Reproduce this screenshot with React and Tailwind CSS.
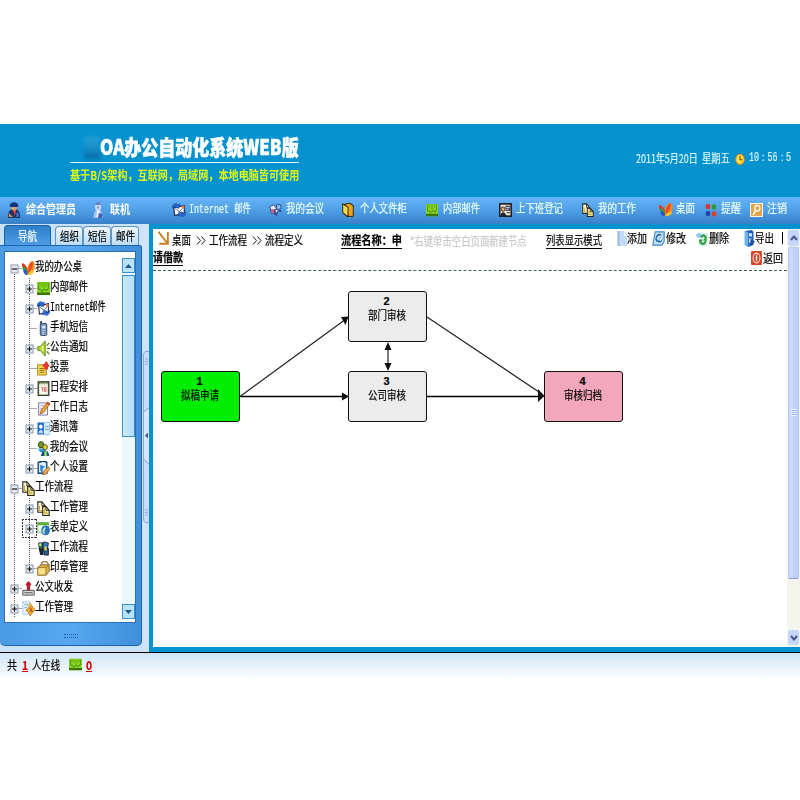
import React, { useLayoutEffect, useRef, useState } from "react";

// Text squeezed or stretched horizontally to a given width.
function T({ w, className = "", children }) {
  const ref = useRef(null);
  const [s, setS] = useState(1);
  useLayoutEffect(() => {
    setS(w / ref.current.offsetWidth);
  }, [w, children]);
  return (
    <span className={"block shrink-0 whitespace-nowrap " + className} style={{ width: w }}>
      <span ref={ref} className="inline-block origin-left" style={{ transform: `scaleX(${s})` }}>
        {children}
      </span>
    </span>
  );
}

const ART = {
  user: (<>
    <path d="M1 16c0-6 2-9 7-9s7 3 7 9z" fill="#15356b" /><path d="M6.500 8h4l-1.500 6z" fill="#e9432e" />
    <circle cx="8" cy="5" r="3.400" fill="#e0a070" /><path d="M3 4C3-1 13-1 13 4l-1 1H4z" fill="#0f3278" /><path d="M2 11l0 4h5z" fill="#e08a4a" /><path d="M11 10l3 2-1 3h-3z" fill="#3a6fc0" />
  </>),
  link: (<>
    <path d="M2 16c0-6 2-8 6-8s6 2 6 8z" fill="#a3c4f6" /><path d="M7 8h3l1 7H6z" fill="#f3f8ff" />
    <circle cx="8" cy="5" r="4" fill="#cfdcfa" /><path d="M4 3c1-4 7-4 8 0z" fill="#6e7cc8" /><path d="M9 11l5 1-1 4H8z" fill="#4a5cb8" /><circle cx="8" cy="5.500" r="1.300" fill="#7886cc" />
  </>),
  inet: (<>
    <path d="M2 5l12-2v9l-11 2z" fill="#fff" stroke="#1c2450" strokeWidth="1.300" /><path d="M3 6l5.500 4L14 4" fill="none" stroke="#5a6a90" strokeWidth="1" />
    <path d="M0 5c1-5 6-5 7-3l2-1-1 5-5-1 2-1c-2-1-3 0-4 2z" fill="#2a6fe0" stroke="#12357c" strokeWidth=".6" /><path d="M16 11c-1 5-6 5-7 3l-2 1 1-5 5 1-2 1c2 1 3 0 4-2z" fill="#2a6fe0" stroke="#12357c" strokeWidth=".6" />
    <path d="M11 3h3v3h-3z" fill="#ef7d3a" />
  </>),
  meet: (<>
    <path d="M1 4l5-2 3 4-2 5-4 1z" fill="#e8eefc" stroke="#24407e" /><path d="M2 7h4v4H3z" fill="#d9536c" />
    <path d="M9 2l5 0 1 4-5 2z" fill="#9cc4f8" stroke="#24407e" /><path d="M6 7h6l-2 8-4-2z" fill="#3c4f9c" /><path d="M8 8h3l-2 3z" fill="#fff" /><path d="M12 8h3v2h-3z" fill="#23418c" />
  </>),
  folder: (<>
    <path d="M2 2l8-2 5 3v12l-6 1z" fill="#e9a41c" stroke="#2a1e08" strokeWidth="1.200" /><path d="M1 1l7 4v11l-7-5z" fill="#ffd94c" stroke="#2a1e08" strokeWidth="1.200" />
  </>),
  green: (<>
    <rect x="0" y="1" width="16" height="14" rx="1" fill="#78c414" /><path d="M0 12h16v3H0z" fill="#3a7607" />
    <path d="M0 3l3 1 5 5 5-5 3-1v9H0z" fill="#8fd92a" /><path d="M2 3v6h2l2 2 3-2 3 1 2-2V3" fill="none" stroke="#4b930a" strokeWidth="1.300" />
  </>),
  clockin: (<>
    <rect x="1" y="1" width="14" height="14" fill="#f3ead2" stroke="#15151c" strokeWidth="1.800" /><circle cx="5" cy="7" r="2.500" fill="#e6aa6c" stroke="#222" />
    <path d="M2 15c0-6 6-6 7 0z" fill="#1e2430" /><path d="M8 3h6v6H8z" fill="#3b3d4e" /><path d="M9 5h4M9 7h3" stroke="#fff" /><path d="M9.500 11h4" stroke="#555" strokeWidth="1.500" />
  </>),
  pages: (<>
    <path d="M1 1h5l4 4v7H1z" fill="#fff6cc" stroke="#222" strokeWidth="1.300" /><path d="M7 6h4l4 4v5.500H7z" fill="#f5e693" stroke="#222" strokeWidth="1.300" />
    <path d="M3 5v5l3 1" fill="none" stroke="#c4aa44" strokeWidth="1.300" /><path d="M9 9v4h4" fill="none" stroke="#c4aa44" strokeWidth="1.300" /><path d="M6 1v4h4M11 6v4h4" fill="none" stroke="#222" />
  </>),
  fly: (<>
    <path d="M7 15C5 8 8 1 13 0c3 1 3 6 2 9-2 4-5 5-8 6z" fill="#f28a1c" /><path d="M8 13C7 8 9 3 13 0c1 4-1 9-5 13z" fill="#ea4a1e" />
    <path d="M7 12C2 10-1 6 0 2c4 1 7 4 7 10z" fill="#e23a26" /><path d="M7 13C2 12 0 9 1 6c3 0 6 3 6 7z" fill="#2f9c48" />
    <path d="M7 15C3 15 1 12 2 9c3 0 5 3 5 6z" fill="#2458cc" /><path d="M7 15c1-3 4-5 8-5-1 4-4 5-8 5z" fill="#fcc62c" />
  </>),
  dots: (<>
    <rect x="1" y="1" width="6" height="6" rx="2.500" fill="#df3529" /><rect x="9" y="1.500" width="6" height="6" rx="2.500" fill="#2d9a35" />
    <rect x="1" y="9" width="6" height="6" rx="2.500" fill="#1b45a8" /><rect x="9" y="9.500" width="6" height="6" rx="2.500" fill="#d8402c" />
  </>),
  key: (<>
    <rect x="0.500" y="0.500" width="15" height="15" fill="#dfa352" stroke="#fff6dd" strokeWidth="1.400" />
    <circle cx="9" cy="6" r="3.200" fill="none" stroke="#fff8e4" strokeWidth="1.600" /><path d="M7 8.500L4 13.500" stroke="#fff8e4" strokeWidth="2" />
  </>),
  phone: (<>
    <path d="M4 0h2v4H4z" fill="#333" /><rect x="4" y="2.500" width="8" height="13" rx="1.500" fill="#6c8db8" stroke="#2c3d58" />
    <path d="M6 5h4.500v3H6z" fill="#d3ecff" /><path d="M6 10h4.500M6 12h4.500M6 14h4.500" stroke="#e6eefa" strokeDasharray="1 .6" />
  </>),
  horn: (<>
    <path d="M1 6h3l6-6v16l-6-6H1z" fill="#b9dc2e" stroke="#4f7d10" /><path d="M7 5v6" stroke="#f4fcb0" strokeWidth="1.500" /><path d="M12 5l3-3M12 8h4M12 11l3 3" stroke="#4c6a18" strokeWidth="1.300" />
  </>),
  vote: (<>
    <path d="M0.500 4h11v11h-11z" fill="#f7d34c" stroke="#a6801c" /><path d="M3 8h6M3 10h6M3 12h6" stroke="#8d641c" /><path d="M9 9V6H6l5.500-6L16 6h-2.500v3z" fill="#e2352e" />
  </>),
  cal: (<>
    <rect x="1.500" y="1" width="13" height="14.500" fill="#dfe6c4" stroke="#2d3a2a" strokeWidth="1.600" /><path d="M2 2h12" stroke="#5d7448" strokeWidth="2" strokeDasharray="2 1" />
    <rect x="4" y="5" width="8" height="8.500" fill="#fff" /><path d="M5 7h2v4M9 7h2v4H9z" stroke="#d94a4a" fill="none" />
  </>),
  note: (<>
    <path d="M2 2h11v13H2z" fill="#f4efff" stroke="#6b6ba0" /><path d="M4 5h6M4 8h5" stroke="#96a4d8" /><path d="M4 14l1-4 8-9 3 2-8 9z" fill="#f2a52b" stroke="#8b5413" strokeWidth=".8" /><path d="M13 1l3 2-2 2-2-2z" fill="#d54832" />
  </>),
  card: (<>
    <rect x="0.500" y="1.500" width="15" height="13" rx="1" fill="#dcecff" stroke="#8eb8e4" /><rect x="1" y="2" width="7.500" height="12" fill="#1f68c8" />
    <circle cx="4.700" cy="6" r="2.200" fill="#fff" /><path d="M2 13c0-5 5.500-5 5.500 0z" fill="#b9dcff" /><path d="M10 6h4.500M10 9h4.500" stroke="#5e94cf" />
  </>),
  people: (<>
    <circle cx="5" cy="4" r="3.300" fill="#6f9a20" stroke="#1f3a0f" /><path d="M1 8h8l1 4H4z" fill="#2f9ad0" /><circle cx="10" cy="6.500" r="2.800" fill="#e6cb3a" stroke="#51471a" /><path d="M5 16c0-8 10-8 10 0z" fill="#12507c" /><path d="M9 11h3v5H9z" fill="#a5df58" />
  </>),
  settings: (<>
    <path d="M1.500 1.500L8 0l4 1.500V13H1.500z" fill="#dff0ff" stroke="#133f7c" strokeWidth="1.700" /><path d="M4 4l6 2-3 2v5l-3-3z" fill="#2e7fd8" /><path d="M7 15l1-4 6-5 2 2-5 6z" fill="#f0a445" stroke="#71501d" strokeWidth=".7" />
  </>),
  form: (<>
    <path d="M0.500 1.500h14v11h-14z" fill="#eef8e8" stroke="#7fb887" /><path d="M0.500 1.500h14v3h-14z" fill="#5fae36" /><circle cx="10.500" cy="10" r="5.300" fill="#2f6fc0" /><path d="M7 9c3-4 5-2 3 0s1 3-1 5c-2-1-3-3-2-5z" fill="#a8e6c2" />
  </>),
  flow: (<>
    <path d="M2 2h5v7H3z" fill="#2e7f42" stroke="#152218" /><path d="M8 1l6 1-1 6-6-1z" fill="#3f77c7" stroke="#152038" /><path d="M2 8h6v7H4z" fill="#1b2330" /><path d="M8 8h6v7H9z" fill="#245a90" stroke="#122" /><path d="M9 6h3v4H9z" fill="#e8d354" /><circle cx="4" cy="4" r="1.500" fill="#c7e39a" />
  </>),
  stampbox: (<>
    <path d="M1 7l4-3h10v7l-4 4H1z" fill="#dfb349" stroke="#7d5a18" /><path d="M1 7h10v8H1z" fill="#f8df8c" stroke="#9b7224" /><path d="M5 5c0-6 9-6 9 0" fill="none" stroke="#a08258" strokeWidth="1.700" /><path d="M11 7l4-3" stroke="#9b7224" />
  </>),
  stamp: (<>
    <path d="M8 0l4 4h-2v6H6V4H4z" fill="#c4202b" /><circle cx="8" cy="4" r="2.600" fill="#b0202b" /><path d="M1 10h14v5H1z" fill="#dedede" stroke="#3a3a3a" /><path d="M3 12.500h10" stroke="#444" />
  </>),
  work: (<>
    <path d="M1 1h9v13H1z" fill="#e2f0fb" stroke="#8fb3d2" strokeDasharray="2 1" /><path d="M3 4h5M3 7h3" stroke="#6aa6d8" /><path d="M10 3l6 6-6 7-2-4-3-2 3-3z" fill="#f2a42c" stroke="#9f621a" strokeWidth=".7" /><circle cx="10" cy="4" r="2" fill="#e8b24a" /><path d="M11 7v4h2" stroke="#70400c" fill="none" />
  </>),
  arrow: (<path d="M2 1l11 12M3 14.500h11.500V1" fill="none" stroke="#c87d1c" strokeWidth="2.400" />),
  add: (<>
    <path d="M1 0h11l4 4v12H1z" fill="#c6dcf6" /><path d="M1 0h3v16H1z" fill="#95b9e6" /><path d="M11 0v5h5z" fill="#f4f9ff" />
  </>),
  edit: (<>
    <path d="M4 1h11v10l-3 4H1z" fill="#c8e6f8" stroke="#3b87c2" strokeWidth="1.300" /><path d="M11 4C7 3 5 6 5 9c1 3 5 3 7 1" fill="none" stroke="#1d68b0" strokeWidth="1.800" /><path d="M8 10l5-6 2 1-4 6z" fill="#fff" stroke="#2572b5" strokeWidth=".8" />
  </>),
  del: (<>
    <path d="M4 1l12 1-1 14H4z" fill="#d9f0f6" /><path d="M0 4l4-2 4 2-2 3H1z" fill="#8fc4ec" /><path d="M7 7c2-4 6-2 6 1M13 10c-1 5-5 4-7 2" fill="none" stroke="#28a02e" strokeWidth="2.400" /><path d="M4 9h5l-4 5zM14 5v5H9.500z" fill="#28a02e" />
  </>),
  exp: (<>
    <path d="M3 1l9-1 2 2v12l-7 2-4-2z" fill="#1f62b8" /><path d="M2 1l5 1v14l-5-2z" fill="#6fb4f0" /><path d="M8 3h4v3H8zM8 8h4v4H8z" fill="#cce6fc" /><path d="M10 8l6 3-6 4z" fill="#1c4f9f" />
  </>),
  back: (<>
    <rect x="0" y="0" width="16" height="16" rx="1.500" fill="#d9482f" /><ellipse cx="8" cy="8" rx="5" ry="5.500" fill="none" stroke="#ffd7c6" strokeWidth="1.600" /><path d="M8 5v6" stroke="#fff" strokeWidth="2" />
  </>),
  clock: (<>
    <circle cx="8" cy="8.500" r="6.800" fill="#ffe24a" stroke="#d08a1b" strokeWidth="1.500" /><path d="M8 4v5h4" fill="none" stroke="#7a3b08" strokeWidth="1.600" />
  </>),
};

function Icon({ n, w = 13, h = 14 }) {
  return (
    <svg width={w} height={h} viewBox="0 0 16 16" preserveAspectRatio="none" className="block shrink-0">
      {ART[n]}
    </svg>
  );
}

// [icon, label, gap before icon, icon width, gap before text, text width, bold]
const NAV = [
  ["user", "综合管理员", 7, 14, 5, 50, true],
  ["link", "联机", 16, 12, 6, 20, true],
  ["inet", "Internet 邮件", 42, 14, 3, 62],
  ["meet", "我的会议", 18, 13, 4, 38],
  ["folder", "个人文件柜", 18, 12, 6, 47],
  ["green", "内部邮件", 19, 12, 5, 37],
  ["clockin", "上下班登记", 19, 13, 4, 47],
  ["pages", "我的工作", 19, 12, 4, 38],
  ["fly", "桌面", 23, 14, 3, 19],
  ["dots", "提醒", 10, 12, 4, 20],
  ["key", "注销", 9, 13, 4, 20],
];

function Header() {
  return (
    <header className="h-[73px] bg-[#0592cf] flex justify-between overflow-hidden">
      <div className="pl-[70px] pt-[9px]">
        <div className="flex items-center h-[26px] pl-[14px]">
          <div className="w-4 h-[22px] mt-1 bg-gradient-to-b from-[#2a9fd6] via-[#168fca] to-[#0a67a6] blur-[2px]" />
          <T w={199} className="text-[21px] leading-[24px] -mt-px font-black text-white [-webkit-text-stroke:0.600px_#fff]">OA办公自动化系统WEB版</T>
        </div>
        <div className="h-px w-[229px] mt-[3px] bg-[#e6f6fd]" />
        <T w={229} className="mt-[4px] text-[12px] leading-[16px] font-bold text-[#e1fb13]">基于B/S架构，互联网，局域网，本地电脑皆可使用</T>
      </div>
      <div className="flex items-center h-[18px] mt-[25px] pr-[9px] text-[12px] text-[#d8f6f8] [-webkit-text-stroke:0.200px]">
        <T w={62}>2011年5月20日</T>
        <T w={28} className="ml-1">星期五</T>
        <div className="ml-[5px] mr-1 mt-[2px]"><Icon n="clock" w={10} h={12} /></div>
        <T w={42} className="font-[Liberation_Mono]">10：56：5</T>
      </div>
    </header>
  );
}

function NavBar() {
  return (
    <nav className="h-[27px] flex items-center bg-gradient-to-b from-[#66b4fa] via-[#4f9fe6] to-[#3780c8] text-[12px] leading-[16px] text-[#e9fdf6]">
      {NAV.map(([ic, label, g, iw, tg, tw, bold]) => (
        <div key={label} className="flex items-center shrink-0 -mt-px" style={{ marginLeft: g }}>
          <Icon n={ic} w={iw} h={bold ? 16 : 14} />
          <div style={{ marginLeft: tg }}>
            <T w={tw} className={bold ? "font-bold text-white -mt-[2px]" : "font-[Liberation_Mono,Noto_Sans_CJK_SC] [-webkit-text-stroke:0.200px]"}>{label}</T>
          </div>
        </div>
      ))}
    </nav>
  );
}

// [level, marker, icon, label, text width]
const TREE = [
  [0, "-", "fly", "我的办公桌", 47],
  [1, "+", "green", "内部邮件", 38],
  [1, "+", "inet", "Internet邮件", 56],
  [1, "", "phone", "手机短信", 38],
  [1, "+", "horn", "公告通知", 38],
  [1, "", "vote", "投票", 19],
  [1, "+", "cal", "日程安排", 38],
  [1, "", "note", "工作日志", 38],
  [1, "+", "card", "通讯簿", 28],
  [1, "", "people", "我的会议", 38],
  [1, "+", "settings", "个人设置", 38],
  [0, "-", "pages", "工作流程", 38],
  [1, "+", "pages", "工作管理", 38],
  [1, "+", "form", "表单定义", 38],
  [1, "", "flow", "工作流程", 38],
  [1, "+", "stampbox", "印章管理", 38],
  [0, "+", "stamp", "公文收发", 38],
  [0, "+", "work", "工作管理", 38],
];

function Gutter({ level, mark, first, last, focus }) {
  const cx = level ? 25.5 : 10.5;
  const dash = { stroke: "#555", strokeDasharray: "1 1", fill: "none" };
  return (
    <svg width={level ? 33 : 18} height="20" className="block shrink-0">
      <path d={first ? "M10.500 10V20" : "M10.500 0V20"} {...dash} />
      {level === 1 && <path d={last ? "M25.500 0V10" : "M25.500 0V20"} {...dash} />}
      <path d={`M${cx} 10.500H${cx + 7}`} {...dash} />
      {focus && <path d="M18.500 1V20M32.500 1V20M18 1.500H33M18 19.500H33" stroke="#333" strokeDasharray="2 1" fill="none" />}
      {mark && (
        <g>
          <rect x={cx - 3.500} y="7" width="7" height="8" fill="#e6eaf2" stroke="#8a97ab" />
          <path d={`M${cx - 2.500} 11H${cx + 2.500}` + (mark === "+" ? `M${cx} 8.500V13.500` : "")} stroke="#111" strokeWidth="1.200" />
        </g>
      )}
    </svg>
  );
}

function ArrowButton({ up }) {
  return (
    <div className="h-[15px] w-[13px] flex items-center justify-center border border-[#3f8fc8] bg-[#b9e2fb]">
      <svg width="7" height="4" viewBox="0 0 7 4"><path d={up ? "M0 4L3.500 0L7 4z" : "M0 0L3.500 4L7 0z"} fill="#17579c" /></svg>
    </div>
  );
}

function Sidebar() {
  return (
    <aside className="w-[142px] shrink-0 flex flex-col bg-[#c9e2f8]">
      <div className="h-[21px] flex items-end pl-[4px] text-[12px] leading-[16px] text-black [-webkit-text-stroke:0.200px]">
        <div className="w-[47px] h-[20px] rounded-t-[4px] border border-b-0 border-[#1b63a8] bg-gradient-to-b from-[#2f7fc9] to-[#4c9de6] text-white flex items-center justify-center">
          <T w={19}>导航</T>
        </div>
        {["组织", "短信", "邮件"].map((t, i) => (
          <div key={t} className={"h-[19px] w-[28px] rounded-t-[4px] border border-b-0 border-[#5d94c6] bg-gradient-to-b from-[#eef7fe] to-[#bcdcf6] flex items-center justify-center" + (i === 0 ? " ml-[4px]" : "")}>
            <T w={19}>{t}</T>
          </div>
        ))}
      </div>
      <div className="h-[401px] rounded-b-[5px] rounded-tr-[3px] border border-l-0 border-[#1d62ab] bg-gradient-to-r from-[#4a9ae4] via-[#57a8ee] to-[#3f8fdc] px-[4px] pt-[5px] flex flex-col">
        <div className="h-[372px] w-[132px] border border-[#2a6db4] bg-white flex justify-between">
          <div className="pt-[6px] w-[114px] overflow-hidden -ml-[1px]">
            {TREE.map(([lv, mk, ic, label, w], i) => (
              <div key={i} className="h-[20px] flex items-center">
                <Gutter level={lv} mark={mk} first={i === 0} last={i === 10 || i === 15} focus={i === 13} />
                <Icon n={ic} w={13} h={15} />
                <T w={w} className="text-[12px] leading-[20px] text-black font-[Liberation_Mono,Noto_Sans_CJK_SC] [-webkit-text-stroke:0.200px]">{label}</T>
              </div>
            ))}
          </div>
          <div className="w-[13px] mt-[6px] h-[361px] bg-[#e9f7fe] flex flex-col">
            <ArrowButton up />
            <div className="mt-[2px] h-[162px] border border-[#3f8fc8] bg-gradient-to-r from-[#c8eafd] to-[#b3def8]" />
            <div className="flex-1" />
            <ArrowButton />
          </div>
        </div>
        <div className="flex-1 flex items-center justify-center">
          <div className="w-[14px] h-[4px] mt-1 border-y border-dotted border-[#1e5fa8]" />
        </div>
      </div>
    </aside>
  );
}

function Splitter() {
  return (
    <div className="w-[7px] shrink-0 bg-[#cfe3f9] pt-[127px]">
      <svg width="7" height="172" viewBox="0 0 7 172" className="block">
        <path d="M7 0.500H3.500Q1.500 1 1.500 4V168Q1.500 171 3.500 171.500H7" fill="#cbdcfb" stroke="#86a2e0" />
        <path d="M7 57L1.500 61V108L7 113" fill="#d8e5fc" stroke="#86a2e0" />
        <path d="M6 81.500v6L3 84.500z" fill="#3d5896" />
        <path d="M3 8h3M3 10.500h3M3 13h3M3 159h3M3 161.500h3M3 164h3" stroke="#8ea9df" />
      </svg>
    </div>
  );
}

const NODES = [
  { id: "1", label: "拟稿申请", x: 8, y: 100, bg: "bg-[#00ee00]" },
  { id: "2", label: "部门审核", x: 195, y: 20, bg: "bg-[#ececec]" },
  { id: "3", label: "公司审核", x: 195, y: 100, bg: "bg-[#ececec]" },
  { id: "4", label: "审核归档", x: 391, y: 100, bg: "bg-[#f3a7bd]" },
];

function Diagram() {
  return (
    <div className="relative flex-1">
      <svg width="480" height="160" className="absolute left-0 top-0">
        <g stroke="#222" fill="none" strokeWidth="1.200">
          <path d="M87 125.500L193 48M274 46L389 123M235 77V94" />
          <path d="M87 125.500H192M274 125.500H388" stroke="#000" strokeWidth="1.500" />
        </g>
        <g fill="#111">
          <path d="M195.500 45.500L188 46L192.500 54zM196 125.500L189 121.500V129.500z" />
          <path d="M391.500 125L385 118V131zM235 71L231.500 79H238.500zM235 100L231.500 92H238.500z" />
        </g>
      </svg>
      {NODES.map((n) => (
        <div
          key={n.id}
          className={"absolute w-[79px] h-[51px] rounded-[3px] border border-[#111] flex flex-col items-center pt-[3px] text-black " + n.bg}
          style={{ left: n.x, top: n.y }}
        >
          <T w={6} className="font-['Liberation_Sans'] text-[11px] font-bold leading-[12px] h-[12px] -ml-[2px]">{n.id}</T>
          <T w={38} className="text-[12px] leading-[17px] h-[17px] -ml-[2px] -mt-px [-webkit-text-stroke:0.200px]">{n.label}</T>
        </div>
      ))}
    </div>
  );
}

function Chevrons() {
  return (
    <svg width="10" height="9" className="ml-[5px] mt-[2px]">
      <path d="M1 .5L4.500 4.500L1 8.500M5.500 .5L9 4.500L5.500 8.500" fill="none" stroke="#222" />
    </svg>
  );
}

function Content() {
  return (
    <main className="w-[634px] shrink-0 bg-white flex flex-col text-black text-[12px] leading-[18px] [-webkit-text-stroke:0.200px]">
      <div className="h-[42px] border-b border-dashed border-[#3f6350] flex flex-col">
        <div className="h-[20px] flex items-center">
          <div className="ml-[4px] mr-[3px] -mt-[3px]"><Icon n="arrow" w={12} h={14} /></div>
          <T w={19} className="mt-[2px]">桌面</T>
          <Chevrons />
          <T w={38} className="ml-[3px] mt-[2px]">工作流程</T>
          <Chevrons />
          <T w={38} className="ml-[3px] mt-[2px]">流程定义</T>
          <div className="ml-[38px] mt-[5px] h-[15px] border-b border-black"><T w={61} className="font-bold leading-[12px]">流程名称：申</T></div>
          <T w={117} className="ml-[8px] mt-[3px] text-[#c8c8c8]">*右键单击空白页面新建节点</T>
          <div className="ml-[19px] mt-[5px] h-[15px] border-b border-black"><T w={56} className="leading-[12px]">列表显示模式</T></div>
          <div className="ml-[15px] -mt-[2px]"><Icon n="add" w={10} h={15} /></div>
          <T w={20} className="-mt-[2px]">添加</T>
          <div className="ml-[5px] mr-[1px] -mt-[2px]"><Icon n="edit" w={13} h={15} /></div>
          <T w={20} className="-mt-[2px]">修改</T>
          <div className="ml-[10px] mr-[1px] -mt-[2px]"><Icon n="del" w={12} h={15} /></div>
          <T w={20} className="-mt-[2px]">删除</T>
          <div className="ml-[14px] -mt-[1px]"><Icon n="exp" w={12} h={17} /></div>
          <T w={19} className="-mt-[2px]">导出</T>
          <div className="ml-[8px] w-px h-[12px] bg-black -mt-[3px]" />
        </div>
        <div className="h-[18px] flex items-center justify-between pr-[4px]">
          <div className="h-[16px] border-b border-black"><T w={30} className="font-bold leading-[14px]">请借款</T></div>
          <div className="flex items-center -mt-px">
            <Icon n="back" w={11} h={14} />
            <T w={20} className="ml-[1px]">返回</T>
          </div>
        </div>
      </div>
      <Diagram />
    </main>
  );
}

function PageScroll() {
  return (
    <div className="flex-1 bg-[#f5f5f0] flex flex-col items-center pb-[2px]">
      <div className="w-[11px] h-[16px] mt-[1px] rounded-[2px] bg-[#c6d6fb] flex items-center justify-center">
        <svg width="8" height="6"><path d="M1 5L4 1.500L7 5" fill="none" stroke="#45598c" strokeWidth="2" /></svg>
      </div>
      <div className="w-[11px] mt-[1px] h-[332px] rounded-[2px] border border-[#b4c8f4] border-b-[#7f9bc9] bg-gradient-to-r from-[#cddbfd] to-[#b9ccf8] flex items-center justify-center">
        <svg width="6" height="8"><path d="M0 .5h6M0 2.500h6M0 4.500h6M0 6.500h6" stroke="#eef4ff" /><path d="M1 1.500h5M1 3.500h5M1 5.500h5" stroke="#9cb3e8" /></svg>
      </div>
      <div className="flex-1" />
      <div className="w-[11px] h-[15px] rounded-[2px] bg-[#c6d6fb] flex items-center justify-center">
        <svg width="8" height="6"><path d="M1 1L4 4.500L7 1" fill="none" stroke="#45598c" strokeWidth="2" /></svg>
      </div>
    </div>
  );
}

export default function App() {
  return (
    <div className="w-[800px] h-[800px] bg-white pt-[124px] overflow-hidden font-['Noto_Sans_CJK_SC',sans-serif]">
      <Header />
      <NavBar />
      <div className="h-[428px] flex bg-[#0592cf]">
        <Sidebar />
        <Splitter />
        <div className="flex-1 flex pl-[4px] pt-[5px] pb-[5px]">
          <Content />
          <PageScroll />
        </div>
      </div>
      <footer className="h-[28px] border-t border-black bg-gradient-to-b from-[#cfe6f7] to-white flex items-center pl-[7px] pb-[4px] text-[12px] leading-[16px] text-black [-webkit-text-stroke:0.200px]">
        <T w={10}>共</T>
        <T w={6} className="ml-[5px] h-[14px] leading-[13px] border-b border-[#d00] font-bold text-[#d00000]">1</T>
        <T w={28} className="ml-[4px]">人在线</T>
        <div className="ml-[9px]"><Icon n="green" w={13} h={13} /></div>
        <T w={6} className="ml-[4px] h-[14px] leading-[13px] border-b border-[#d00] font-bold text-[#d00000]">0</T>
      </footer>
    </div>
  );
}
